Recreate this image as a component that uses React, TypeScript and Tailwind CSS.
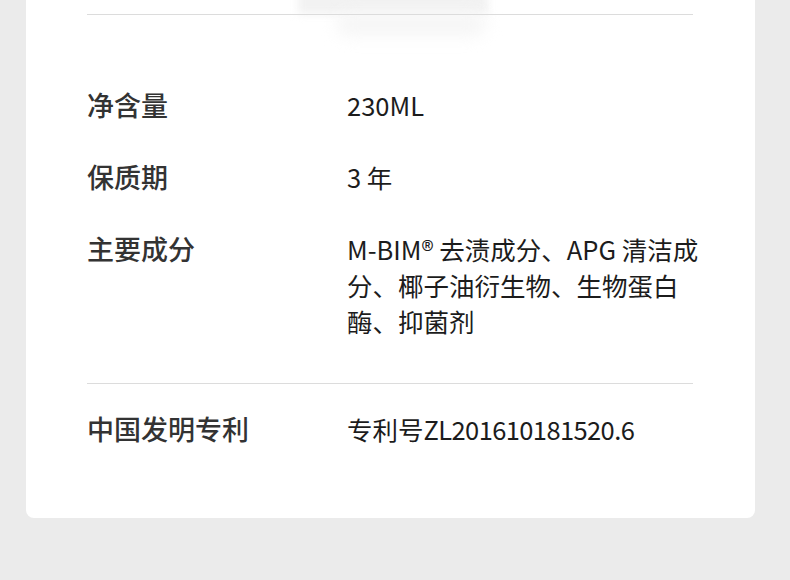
import React from "react";

const font = { fontFamily: '"Noto Sans CJK SC", "Noto Sans", sans-serif' };

function Row({ label, children }: { label: string; children: React.ReactNode }) {
  return (
    <div className="flex">
      <div className="w-[260px] shrink-0 text-[27px] leading-[36px] font-medium text-[#333333]">{label}</div>
      <div className="text-[25.5px] leading-[36px] text-[#1c1c1c] whitespace-nowrap">{children}</div>
    </div>
  );
}

export default function App() {
  return (
    <div className="min-h-[580px] bg-[#ebebeb] pb-[61px]" style={font}>
      <div className="relative ml-[26px] w-[729px] bg-white rounded-b-[8px] px-[61px] pt-[14px] pb-[69px]">
        <div className="pointer-events-none absolute left-[272px] -top-[10px] h-[24px] w-[190px] bg-[#f2f2f2] blur-[4px]" />
        <div className="pointer-events-none absolute left-[310px] top-[12px] h-[24px] w-[150px] rounded-full bg-[#f6f6f6] blur-[8px]" />
        <div className="relative h-px w-[606px] bg-[#dcdcdc]" />
        <div className="relative flex flex-col gap-[36px] pt-[72px]">
          <Row label="净含量">230ML</Row>
          <Row label="保质期">3 年</Row>
          <Row label="主要成分">
            M-BIM® 去渍成分、APG 清洁成
            <br />
            分、椰子油衍生物、生物蛋白
            <br />
            酶、抑菌剂
          </Row>
        </div>
        <div className="mt-[44px] h-px w-[606px] bg-[#dcdcdc]" />
        <div className="pt-[27px] pb-[2px]">
          <Row label="中国发明专利">
            专利号<span className="tracking-[-0.6px]">ZL201610181520.6</span>
          </Row>
        </div>
      </div>
    </div>
  );
}
